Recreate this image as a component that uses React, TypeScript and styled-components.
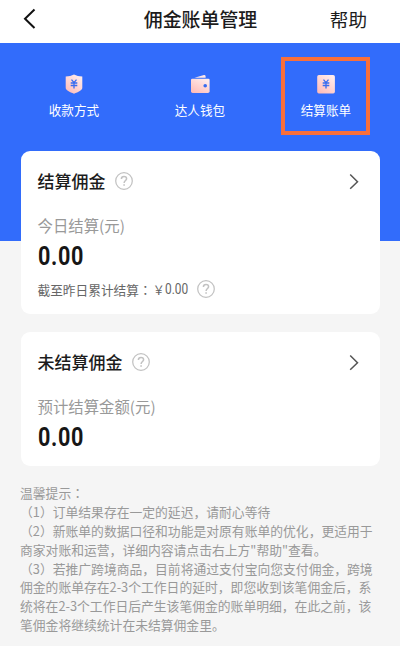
import React from 'react';
import styled, { createGlobalStyle } from 'styled-components';

const GlobalStyle = createGlobalStyle`
  * { box-sizing: border-box; }
  body {
    margin: 0;
    background: #f5f5f5;
    font-family: "Noto Sans CJK SC", sans-serif;
    color: #1c1c1c;
  }
  svg { display: block; flex: none; }
`;

const Page = styled.div`
  width: 400px;
  height: 646px;
  overflow: hidden;
  background: linear-gradient(#326cfb, #326cfb) 0 0 / 100% 241px no-repeat #f5f5f5;
`;

const Header = styled.header`
  display: grid;
  grid-template-columns: 80px 1fr 80px;
  align-items: center;
  height: 43px;
  padding: 0 33px 5px 22px;
  background: #fff;
`;

const Title = styled.h1`
  margin: 0;
  padding-left: 12px;
  font-size: 18.9px;
  line-height: 28px;
  font-weight: 500;
  text-align: center;
  white-space: nowrap;
`;

const Help = styled.span`
  font-size: 18.6px;
  line-height: 28px;
  text-align: right;
`;

const Tabs = styled.nav`
  display: flex;
  height: 108px;
  padding: 14px 29.6px 0 29.4px;
  justify-content: space-between;
`;

const Tab = styled.div<{ $marked?: boolean }>`
  display: flex;
  flex-direction: column;
  align-items: center;
  width: 89px;
  height: 78px;
  padding-top: 13px;
  border: 4px solid ${(p) => (p.$marked ? '#f96f3a' : 'transparent')};
`;

const TabLabel = styled.span`
  margin-top: 6px;
  font-size: 12.6px;
  line-height: 20px;
  color: #fff;
`;

const Card = styled.section<{ $height: number }>`
  height: ${(p) => p.$height}px;
  margin: 0 20.5px 18px;
  padding: 16px 20.5px 0 17px;
  border-radius: 9px;
  background: #fff;
`;

const CardHead = styled.div`
  display: flex;
  align-items: center;
  height: 28px;
`;

const CardTitle = styled.h2`
  flex: none;
  margin: 0 9px 0 0;
  font-size: 17px;
  line-height: 28px;
  font-weight: 500;
`;

const Spacer = styled.div`
  flex: 1;
`;

const Caption = styled.div`
  margin-top: 19px;
  font-size: 15.4px;
  line-height: 22px;
  color: #999;
`;

const Amount = styled.div`
  width: max-content;
  margin-top: 4px;
  font-family: Roboto, sans-serif;
  font-size: 26px;
  line-height: 32px;
  font-weight: 700;
  letter-spacing: 0.8px;
  color: #161616;
  transform: scaleX(0.83);
  transform-origin: left;
`;

const Total = styled.div`
  display: flex;
  align-items: center;
  height: 24px;
  margin-top: 5px;
  font-size: 12.7px;
  color: #666;
`;

const Colon = styled.span`
  font-family: "Noto Sans CJK TC", sans-serif;
`;

const YenSign = styled.span`
  margin-left: 1px;
  font-size: 12px;
`;

const Money = styled.span`
  width: 24px;
  margin-right: 8px;
  font-family: Roboto, "Noto Sans CJK SC", sans-serif;
  font-size: 14px;
  transform: scaleX(0.85);
  transform-origin: left;
`;

const Tips = styled.div`
  padding: 0 20px;
  font-size: 12.8px;
  line-height: 18.87px;
  color: #999;
  white-space: nowrap;
`;

const Line = styled.div``;

const BackIcon = () => (
  <svg width="16" height="22" viewBox="0 0 16 22" fill="none" stroke="#111" strokeWidth="2">
    <path d="M12.5 1.500 3 10.700l9.500 9.300" />
  </svg>
);

const NextIcon = () => (
  <svg width="10" height="18" viewBox="0 0 10 18" fill="none" stroke="#555" strokeWidth="1.5">
    <path d="M1.2 2.500 8.500 9.700l-7.300 7.100" />
  </svg>
);

const QuestionIcon = () => (
  <svg width="18" height="18" viewBox="0 0 18 18" fill="none" stroke="#c2c2c2" strokeWidth="1.25">
    <circle cx="9" cy="9" r="8.3" />
    <path d="M6.400 6.900C6.400 5.300 7.400 4.500 9 4.500s2.600.9 2.600 2.200c0 1.700-2.500 2-2.500 4.200" strokeWidth="1.5" />
    <path d="M9.100 12.200v1.600" strokeWidth="1.6" />
  </svg>
);

const Pink = ({ id }: { id: string }) => (
  <defs>
    <linearGradient id={id} x1="0" y1="1" x2="0.7" y2="0">
      <stop offset="0" stopColor="#ffb8b4" />
      <stop offset="1" stopColor="#ffebeb" />
    </linearGradient>
  </defs>
);

const Yen = () => (
  <path d="m7.500 5.600 2.500 3 2.500-3M6.700 9h6.600M6.700 11.500h6.600M10 8.600v6" fill="none" stroke="#376cf0" strokeWidth="1.3" />
);

const ShieldIcon = () => (
  <svg width="20" height="20" viewBox="0 0 20 20">
    <Pink id="shield" />
    <path d="M10 .5c2.500 1.300 5 1.900 8.300 2v11.200c0 2.600-3.900 4.100-8.300 6-4.400-1.900-8.300-3.400-8.300-6V2.500C5 2.400 7.500 1.800 10 .5Z" fill="url(#shield)" />
    <Yen />
  </svg>
);

const WalletIcon = () => (
  <svg width="20" height="20" viewBox="0 0 20 20">
    <Pink id="wallet" />
    <path d="M4.500 3.800 14 1.100q1.500-.2 1.600 1.300v1.400Z" fill="#ffe9e9" />
    <path d="M2.200 4.800h16.200q1.200 0 1.200 1.200v11.300q0 1.700-1.700 1.700H2.600Q1 19 1 17.300V6q0-1.200 1.200-1.200Z" fill="url(#wallet)" />
    <circle cx="15.200" cy="11.800" r="1.800" fill="#376cf0" />
  </svg>
);

const BillIcon = () => (
  <svg width="20" height="20" viewBox="0 0 20 20">
    <Pink id="bill" />
    <rect x="1.200" y="1" width="17.700" height="18.500" rx="1.700" fill="url(#bill)" />
    <Yen />
  </svg>
);

const tips = [
  '（1）订单结果存在一定的延迟，请耐心等待',
  '（2）新账单的数据口径和功能是对原有账单的优化，更适用于',
  '商家对账和运营，详细内容请点击右上方"帮助"查看。',
  '（3）若推广跨境商品，目前将通过支付宝向您支付佣金，跨境',
  '佣金的账单存在2-3个工作日的延时，即您收到该笔佣金后，系',
  '统将在2-3个工作日后产生该笔佣金的账单明细，在此之前，该',
  '笔佣金将继续统计在未结算佣金里。',
];

const App = () => (
  <>
    <GlobalStyle />
    <Page>
      <Header>
        <BackIcon />
        <Title>佣金账单管理</Title>
        <Help>帮助</Help>
      </Header>
      <Tabs>
        <Tab><ShieldIcon /><TabLabel>收款方式</TabLabel></Tab>
        <Tab><WalletIcon /><TabLabel>达人钱包</TabLabel></Tab>
        <Tab $marked><BillIcon /><TabLabel>结算账单</TabLabel></Tab>
      </Tabs>
      <Card $height={163}>
        <CardHead>
          <CardTitle>结算佣金</CardTitle>
          <QuestionIcon />
          <Spacer />
          <NextIcon />
        </CardHead>
        <Caption>今日结算(元)</Caption>
        <Amount>0.00</Amount>
        <Total>
          <span>截至昨日累计结算</span>
          <Colon>：</Colon>
          <YenSign>￥</YenSign>
          <Money>0.00</Money>
          <QuestionIcon />
        </Total>
      </Card>
      <Card $height={134}>
        <CardHead>
          <CardTitle>未结算佣金</CardTitle>
          <QuestionIcon />
          <Spacer />
          <NextIcon />
        </CardHead>
        <Caption>预计结算金额(元)</Caption>
        <Amount>0.00</Amount>
      </Card>
      <Tips>
        <Line>温馨提示<Colon>：</Colon></Line>
        {tips.map((tip) => (
          <Line key={tip}>{tip}</Line>
        ))}
      </Tips>
    </Page>
  </>
);

export default App;
